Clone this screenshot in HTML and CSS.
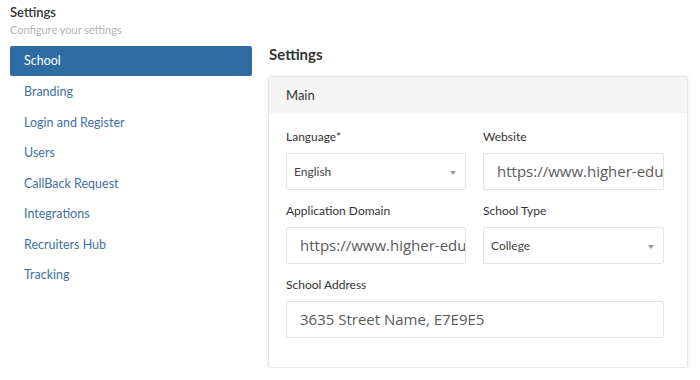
FILE: index.html
```html
<!DOCTYPE html>
<html lang="en">
<head>
    <meta charset="UTF-8">
    <title>Settings</title>
    <link rel="stylesheet" href="styles.css">
</head>
<body>
    <div class="layout">
        <aside class="sidebar">
            <div class="side-title">Settings</div>
            <div class="side-sub">Configure your settings</div>
            <ul class="side-nav">
                <li class="active">School</li>
                <li>Branding</li>
                <li>Login and Register</li>
                <li>Users</li>
                <li>CallBack Request</li>
                <li>Integrations</li>
                <li>Recruiters Hub</li>
                <li>Tracking</li>
            </ul>
        </aside>

        <main class="content">
            <h2>Settings</h2>
            <div class="card">
                <div class="card-head">Main</div>
                <div class="card-body">
                    <div class="field">
                        <label>Language*</label>
                        <div class="select"><span>English</span><span class="caret"></span></div>
                    </div>
                    <div class="field">
                        <label>Website</label>
                        <div class="input">https://www.higher-edu</div>
                    </div>
                    <div class="field">
                        <label>Application Domain</label>
                        <div class="input">https://www.higher-edu</div>
                    </div>
                    <div class="field">
                        <label>School Type</label>
                        <div class="select"><span>College</span><span class="caret"></span></div>
                    </div>
                    <div class="field wide">
                        <label>School Address</label>
                        <div class="input">3635 Street Name, E7E9E5</div>
                    </div>
                </div>
            </div>
        </main>
    </div>
</body>
</html>
```

FILE: styles.css
```css
body {
    margin: 0;
    font-family: 'Lato', sans-serif;
    color: #333;
    background: #fff;
}

.layout {
    display: flex;
    padding: 4px 0 0 10px;
}

.sidebar {
    width: 242px;
}

.side-title {
    font-size: 13px;
    font-weight: 600;
    line-height: 16px;
    color: #333;
}

.side-sub {
    font-size: 11px;
    line-height: 14px;
    margin-top: 3px;
    color: #b3b3b3;
}

.side-nav {
    list-style: none;
    margin: 9px 0 0;
    padding: 0;
}

.side-nav li {
    height: 30.5px;
    line-height: 31px;
    padding-left: 14px;
    font-size: 12.5px;
    color: #41709f;
}

.side-nav li.active {
    height: 30px;
    line-height: 30px;
    background: #2d6da4;
    color: #fff;
    border-radius: 2px;
}

.content {
    margin-left: 16px;
    width: 420px;
}

h2 {
    font-size: 15px;
    font-weight: 700;
    line-height: 20px;
    margin: 40px 0 12px 1px;
    color: #333;
}

.card {
    border: 1px solid #e6e6e6;
    border-radius: 3px;
    box-shadow: 0 2px 6px rgba(0, 0, 0, 0.08);
}

.card-head {
    background: #f5f5f5;
    height: 36px;
    line-height: 36px;
    padding-left: 17px;
    font-size: 13px;
    color: #333;
}

.card-body {
    display: grid;
    grid-template-columns: 180px 181px;
    column-gap: 17px;
    row-gap: 13px;
    padding: 16px 23px 29px 17px;
}

.field.wide {
    grid-column: 1 / 3;
}

label {
    display: block;
    font-size: 12px;
    line-height: 16px;
    margin-bottom: 8px;
    color: #333;
}

.input, .select {
    box-sizing: border-box;
    height: 37px;
    border: 1px solid #e3e3e3;
    border-radius: 2px;
    white-space: nowrap;
    overflow: hidden;
}

.input {
    font-family: 'Open Sans', sans-serif;
    font-size: 15px;
    line-height: 35px;
    padding: 0 13px;
    color: #5a5a5a;
}

.select {
    display: flex;
    align-items: center;
    justify-content: space-between;
    font-size: 12px;
    padding: 0 9px 0 7px;
    color: #444;
}

.caret {
    width: 0;
    height: 0;
    margin-top: 2px;
    border-left: 3px solid transparent;
    border-right: 3px solid transparent;
    border-top: 4px solid #999;
}
```
